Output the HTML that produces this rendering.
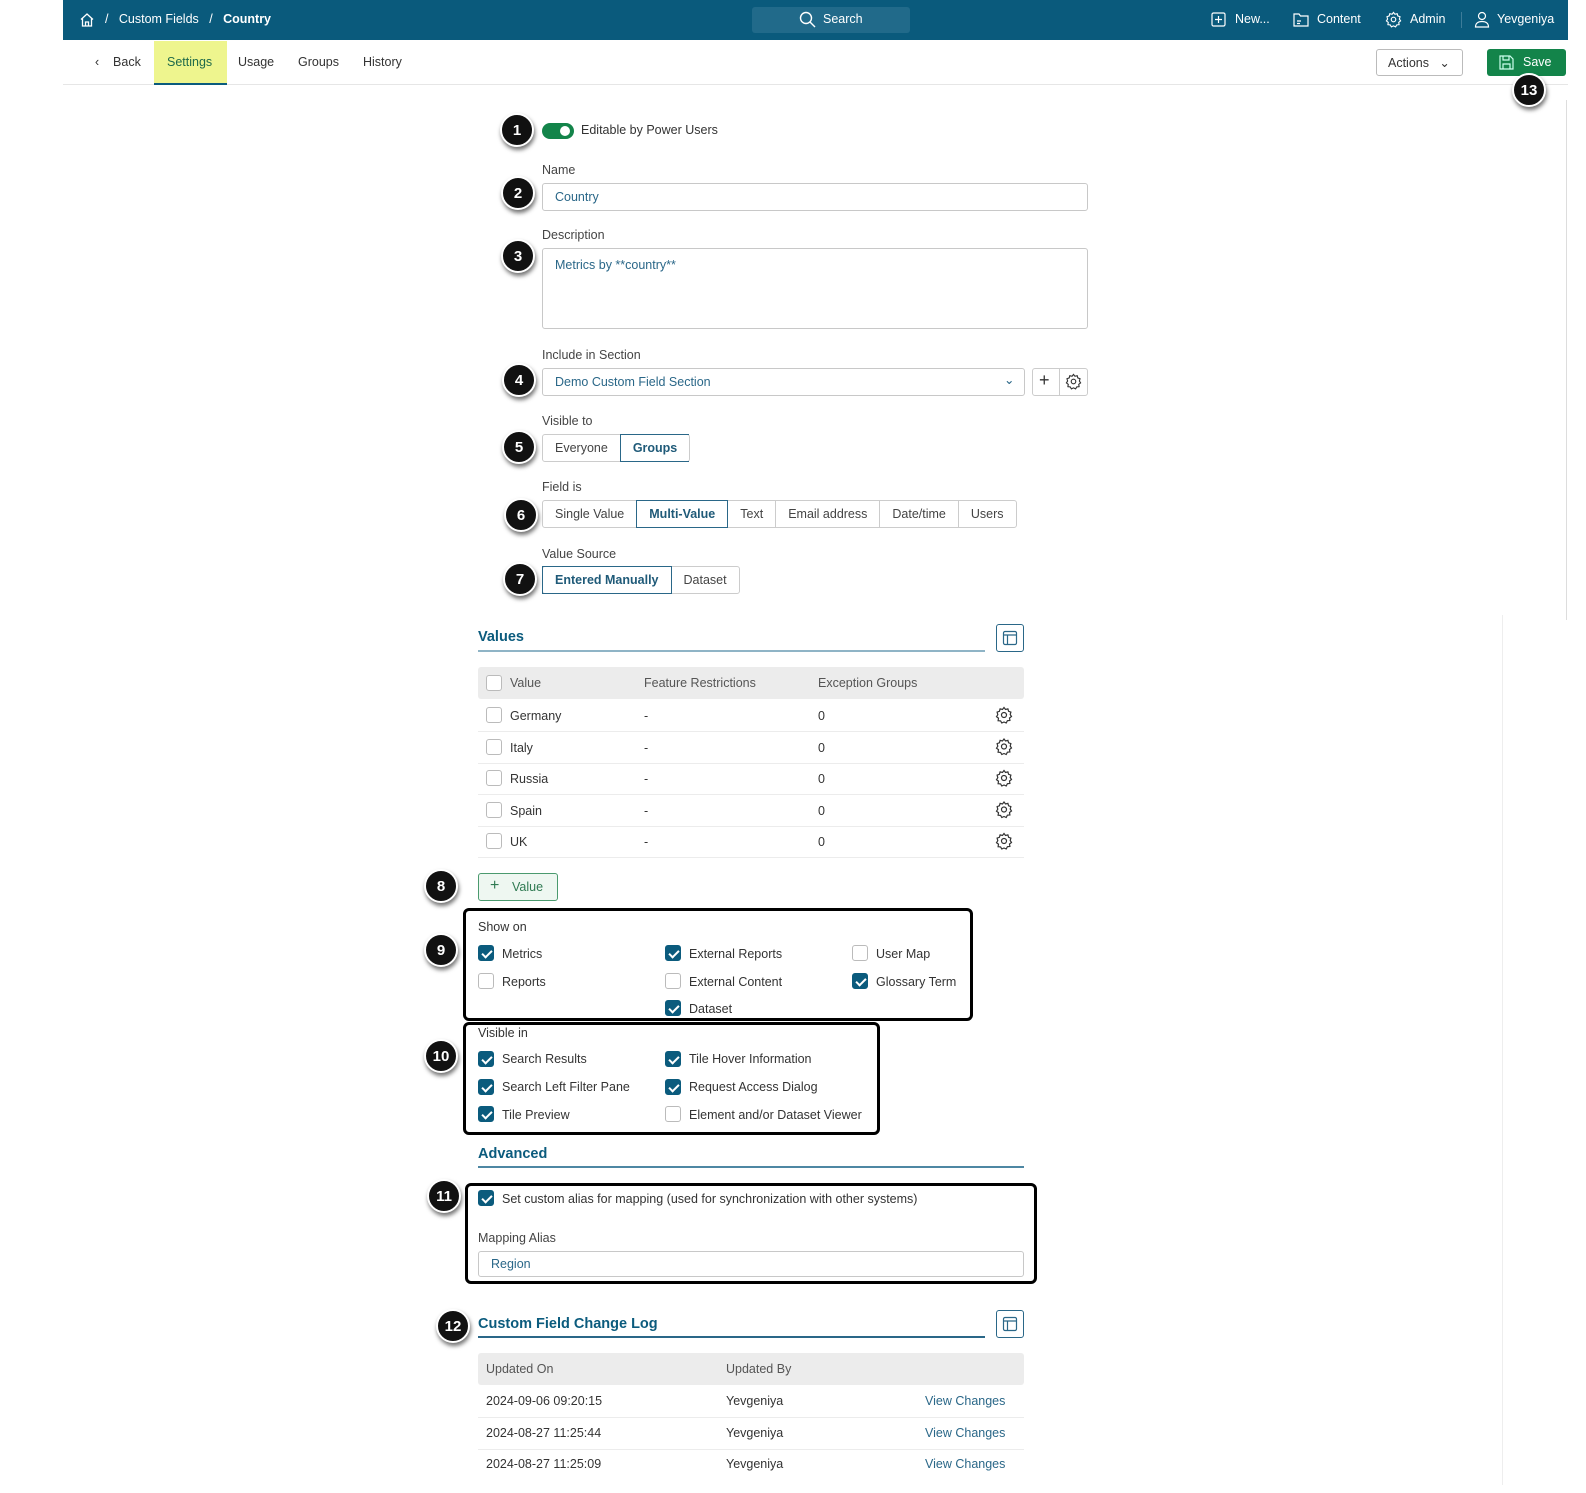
<!DOCTYPE html>
<html><head><meta charset="utf-8"><style>
*{box-sizing:border-box;margin:0;padding:0}
body{width:1586px;height:1493px;position:relative;background:#fff;font-family:"Liberation Sans",sans-serif;font-size:12.5px;color:#333;overflow:hidden}
.a{position:absolute}
.hdr{left:63px;top:0;width:1505px;height:40px;background:#0a5a7c;color:#fff}
.sub{left:63px;top:40px;width:1505px;height:45px;border-bottom:1px solid #e6e6e6}
.b{position:absolute;width:34px;height:34px;border-radius:50%;background:#111;border:2px solid #fff;color:#fff;font-weight:bold;font-size:15px;display:flex;align-items:center;justify-content:center;box-shadow:1px 3px 4px rgba(0,0,0,.55)}
.lbl{color:#444;font-size:12.5px}
.inp{border:1px solid #c8c8c8;border-radius:3px;color:#2a6788;padding-left:12px;display:flex;align-items:center}
.seg{display:flex;border:1px solid #ccc;border-radius:3px;height:28px}
.seg div{padding:0 12px;display:flex;align-items:center;border-right:1px solid #ccc;color:#444}
.seg div:last-child{border-right:none}
.seg .on{border:1px solid #2a6788;color:#1f5a78;font-weight:bold;margin:-1px 0 -1px -1px}
.cb{position:absolute;width:16px;height:16px;border:1px solid #bbb;border-radius:3px;background:#fff}
.cb.c{background:#0b5b7d;border-color:#0b5b7d}
.cb.c::after{content:"";position:absolute;left:5px;top:2px;width:4px;height:8px;border:solid #fff;border-width:0 2px 2px 0;transform:rotate(45deg)}
.t{position:absolute;white-space:nowrap}
.h2{color:#0b5b7d;font-size:14.5px;font-weight:bold}
.row{position:absolute;left:478px;width:546px;height:32px;border-bottom:1px solid #ececec}
.box{position:absolute;border:3px solid #000;border-radius:6px}
.ibtn{position:absolute;width:28px;height:28px;border:1px solid #2a6788;border-radius:3px}
</style></head><body>
<div class="a hdr">
 <svg class="a" style="left:16px;top:12px" width="16" height="16" viewBox="0 0 16 16" fill="none" stroke="#fff" stroke-width="1.3"><path d="M2 7.5L8 2l6 5.5M3.5 6.5V14h9V6.5M6.5 14v-4h3v4"/></svg>
 <span class="t" style="left:42px;top:12px">/&nbsp;&nbsp; Custom Fields &nbsp;&nbsp;/&nbsp;&nbsp; <b>Country</b></span>
 <div class="a" style="left:689px;top:7px;width:158px;height:26px;background:#216a8a;border-radius:3px"></div>
 <svg class="a" style="left:736px;top:11px" width="17" height="17" viewBox="0 0 17 17" fill="none" stroke="#fff" stroke-width="1.4"><circle cx="7" cy="7" r="5.5"/><path d="M11 11l5 5"/></svg>
 <span class="t" style="left:760px;top:12px">Search</span>
 <svg class="a" style="left:1148px;top:12px" width="15" height="15" viewBox="0 0 15 15" fill="none" stroke="#fff" stroke-width="1.2"><rect x="1" y="1" width="13" height="13" rx="1.5"/><path d="M7.5 4v7M4 7.5h7"/></svg>
 <span class="t" style="left:1172px;top:12px">New...</span>
 <svg class="a" style="left:1230px;top:12px" width="16" height="15" viewBox="0 0 16 15" fill="none" stroke="#fff" stroke-width="1.2"><path d="M1 2h5l1.5 2H15v10H1z M4 9h4M4 11.5h3"/></svg>
 <span class="t" style="left:1254px;top:12px">Content</span>
 <svg class="a" style="left:1322px;top:11px" width="17" height="17" viewBox="0 0 24 24" fill="none" stroke="#fff" stroke-width="1.6"><circle cx="12" cy="12" r="3.2"/><path d="M12 2l2 2.6 3.2-.8.9 3.2 3.1 1.1-.9 3.2L22 14l-2.6 2 .5 3.3-3.3.3L15 22.4 12 21l-3 1.4-1.6-2.8-3.3-.3.5-3.3L2 14l1.7-2.7-.9-3.2 3.1-1.1.9-3.2L10 4.6z"/></svg>
 <span class="t" style="left:1347px;top:12px">Admin</span>
 <div class="a" style="left:1398px;top:12px;width:1px;height:16px;background:#3d7c99"></div>
 <svg class="a" style="left:1411px;top:11px" width="16" height="17" viewBox="0 0 16 17" fill="none" stroke="#fff" stroke-width="1.2"><circle cx="8" cy="5" r="3.5"/><path d="M1.5 16c0-4 3-5.5 6.5-5.5s6.5 1.5 6.5 5.5z"/></svg>
 <span class="t" style="left:1434px;top:12px">Yevgeniya</span>
</div>
<div class="a sub">
 <span class="t" style="left:32px;top:15px">‹&nbsp;&nbsp;&nbsp; Back</span>
 <div class="a" style="left:91px;top:1px;width:73px;height:44px;background:#eef58e;border-bottom:2px solid #0b5b7d"></div>
 <span class="t" style="left:104px;top:15px;color:#1f6a4a">Settings</span>
 <span class="t" style="left:175px;top:15px">Usage</span>
 <span class="t" style="left:235px;top:15px">Groups</span>
 <span class="t" style="left:300px;top:15px">History</span>
 <div class="a" style="left:1313px;top:9px;width:87px;height:27px;border:1px solid #bbb;border-radius:3px"></div>
 <span class="t" style="left:1325px;top:15px">Actions&nbsp;&nbsp; ⌄</span>
 <div class="a" style="left:1424px;top:9px;width:79px;height:27px;background:#13844a;border-radius:3px"></div>
 <svg class="a" style="left:1436px;top:15px" width="15" height="15" viewBox="0 0 15 15" fill="none" stroke="#cfe" stroke-width="1.2"><path d="M1 1h10l3 3v10H1z M4 1v4h6V1 M4 14V9h7v5"/></svg>
 <span class="t" style="left:1460px;top:15px;color:#fff">Save</span>
</div>
<div class="a" style="left:1566px;top:100px;width:1px;height:520px;background:#ddd"></div>
<div class="a" style="left:1502px;top:615px;width:1px;height:870px;background:#eee"></div>

<div class="b" style="left:1512px;top:73px">13</div>

<div class="b" style="left:500px;top:113px">1</div>
<div class="a" style="left:542px;top:123px;width:32px;height:16px;border-radius:8px;background:#13844a"></div>
<div class="a" style="left:560px;top:126px;width:10px;height:10px;border-radius:50%;background:#fff"></div>
<span class="t" style="left:581px;top:123px">Editable by Power Users</span>

<span class="t lbl" style="left:542px;top:163px">Name</span>
<div class="b" style="left:501px;top:176px">2</div>
<div class="a inp" style="left:542px;top:183px;width:546px;height:28px">Country</div>

<span class="t lbl" style="left:542px;top:228px">Description</span>
<div class="b" style="left:501px;top:239px">3</div>
<div class="a inp" style="left:542px;top:248px;width:546px;height:81px;align-items:flex-start;padding-top:9px">Metrics by **country**</div>

<span class="t lbl" style="left:542px;top:348px">Include in Section</span>
<div class="b" style="left:502px;top:363px">4</div>
<div class="a inp" style="left:542px;top:368px;width:483px;height:28px">Demo Custom Field Section</div>
<span class="t" style="left:1004px;top:372px;color:#2a6788">⌄</span>
<div class="a" style="left:1032px;top:368px;width:56px;height:28px;border:1px solid #ccc;border-radius:3px"></div>
<div class="a" style="left:1059px;top:368px;width:1px;height:28px;background:#ccc"></div>
<span class="t" style="left:1039px;top:370px;font-size:18px">+</span>
<svg class="a" style="left:1065px;top:373px" width="17" height="17" viewBox="0 0 24 24" fill="none" stroke="#333" stroke-width="1.6"><circle cx="12" cy="12" r="3.2"/><path d="M12 2l2 2.6 3.2-.8.9 3.2 3.1 1.1-.9 3.2L22 14l-2.6 2 .5 3.3-3.3.3L15 22.4 12 21l-3 1.4-1.6-2.8-3.3-.3.5-3.3L2 14l1.7-2.7-.9-3.2 3.1-1.1.9-3.2L10 4.6z"/></svg>

<span class="t lbl" style="left:542px;top:414px">Visible to</span>
<div class="b" style="left:502px;top:430px">5</div>
<div class="a seg" style="left:542px;top:434px"><div>Everyone</div><div class="on">Groups</div></div>

<span class="t lbl" style="left:542px;top:480px">Field is</span>
<div class="b" style="left:504px;top:498px">6</div>
<div class="a seg" style="left:542px;top:500px"><div>Single Value</div><div class="on">Multi-Value</div><div>Text</div><div>Email address</div><div>Date/time</div><div>Users</div></div>

<span class="t lbl" style="left:542px;top:547px">Value Source</span>
<div class="b" style="left:503px;top:562px">7</div>
<div class="a seg" style="left:542px;top:566px"><div class="on" style="margin-left:-1px">Entered Manually</div><div>Dataset</div></div>

<span class="t h2" style="left:478px;top:629px">Values</span>
<div class="a" style="left:478px;top:650px;width:507px;height:2px;background:#8fb4c6"></div>
<div class="ibtn" style="left:996px;top:624px"></div>
<svg class="a" style="left:1002px;top:630px" width="16" height="16" viewBox="0 0 16 16" fill="none" stroke="#2a6788" stroke-width="1.2"><rect x="1.5" y="1.5" width="13" height="13" rx="1.5"/><path d="M1.5 5h13M5.5 5v9.5"/></svg>
<div class="a" style="left:478px;top:667px;width:546px;height:32px;background:#ececec;border-radius:3px"></div>
<div class="cb" style="left:486px;top:675px"></div>
<span class="t" style="left:510px;top:676px;color:#555">Value</span>
<span class="t" style="left:644px;top:676px;color:#555">Feature Restrictions</span>
<span class="t" style="left:818px;top:676px;color:#555">Exception Groups</span>

<div class="row" style="top:700px"></div>
<div class="row" style="top:732px"></div>
<div class="row" style="top:763px"></div>
<div class="row" style="top:795px"></div>
<div class="row" style="top:826px"></div>
<div class="cb" style="left:486px;top:707px"></div><span class="t" style="left:510px;top:709px">Germany</span><span class="t" style="left:644px;top:709px">-</span><span class="t" style="left:818px;top:709px">0</span>
<div class="cb" style="left:486px;top:739px"></div><span class="t" style="left:510px;top:741px">Italy</span><span class="t" style="left:644px;top:741px">-</span><span class="t" style="left:818px;top:741px">0</span>
<div class="cb" style="left:486px;top:770px"></div><span class="t" style="left:510px;top:772px">Russia</span><span class="t" style="left:644px;top:772px">-</span><span class="t" style="left:818px;top:772px">0</span>
<div class="cb" style="left:486px;top:802px"></div><span class="t" style="left:510px;top:804px">Spain</span><span class="t" style="left:644px;top:804px">-</span><span class="t" style="left:818px;top:804px">0</span>
<div class="cb" style="left:486px;top:833px"></div><span class="t" style="left:510px;top:835px">UK</span><span class="t" style="left:644px;top:835px">-</span><span class="t" style="left:818px;top:835px">0</span>
<svg class="a" style="left:995px;top:706px" width="18" height="150" viewBox="0 0 18 150" fill="none" stroke="#333" stroke-width="1.2">
<g id="g"><circle cx="9" cy="9" r="2.5"/><path d="M9 1.5l1.5 2 2.4-.6.7 2.4 2.3.8-.7 2.4L16.5 10.5l-2 1.5.4 2.5-2.5.2L11.2 17 9 16l-2.2 1-1.2-2.1-2.5-.2.4-2.5-2-1.5 1.3-2L2.1 6.1l2.3-.8.7-2.4 2.4.6z"/></g>
<use href="#g" y="31.5"/><use href="#g" y="63"/><use href="#g" y="94.5"/><use href="#g" y="126"/></svg>

<div class="b" style="left:424px;top:869px">8</div>
<div class="a" style="left:478px;top:873px;width:80px;height:28px;border:1px solid #4a9a6e;background:#eef7f1;border-radius:3px"></div>
<span class="t" style="left:490px;top:877px;color:#2f7a52;font-size:16px">+</span>
<span class="t" style="left:512px;top:880px;color:#2f7a52">Value</span>

<div class="box" style="left:463px;top:908px;width:510px;height:113px"></div>
<div class="b" style="left:424px;top:933px">9</div>
<span class="t" style="left:478px;top:920px">Show on</span>
<div class="cb c" style="left:478px;top:945px"></div><span class="t" style="left:502px;top:947px">Metrics</span>
<div class="cb" style="left:478px;top:973px"></div><span class="t" style="left:502px;top:975px">Reports</span>
<div class="cb c" style="left:665px;top:945px"></div><span class="t" style="left:689px;top:947px">External Reports</span>
<div class="cb" style="left:665px;top:973px"></div><span class="t" style="left:689px;top:975px">External Content</span>
<div class="cb c" style="left:665px;top:1000px"></div><span class="t" style="left:689px;top:1002px">Dataset</span>
<div class="cb" style="left:852px;top:945px"></div><span class="t" style="left:876px;top:947px">User Map</span>
<div class="cb c" style="left:852px;top:973px"></div><span class="t" style="left:876px;top:975px">Glossary Term</span>

<div class="box" style="left:463px;top:1022px;width:417px;height:113px"></div>
<div class="b" style="left:424px;top:1039px">10</div>
<span class="t" style="left:478px;top:1026px">Visible in</span>
<div class="cb c" style="left:478px;top:1051px"></div><span class="t" style="left:502px;top:1052px">Search Results</span>
<div class="cb c" style="left:478px;top:1079px"></div><span class="t" style="left:502px;top:1080px">Search Left Filter Pane</span>
<div class="cb c" style="left:478px;top:1106px"></div><span class="t" style="left:502px;top:1108px">Tile Preview</span>
<div class="cb c" style="left:665px;top:1051px"></div><span class="t" style="left:689px;top:1052px">Tile Hover Information</span>
<div class="cb c" style="left:665px;top:1079px"></div><span class="t" style="left:689px;top:1080px">Request Access Dialog</span>
<div class="cb" style="left:665px;top:1106px"></div><span class="t" style="left:689px;top:1108px">Element and/or Dataset Viewer</span>

<span class="t h2" style="left:478px;top:1146px">Advanced</span>
<div class="a" style="left:478px;top:1166px;width:546px;height:2px;background:#4d87a3"></div>

<div class="box" style="left:465px;top:1183px;width:572px;height:101px"></div>
<div class="b" style="left:427px;top:1179px">11</div>
<div class="cb c" style="left:478px;top:1190px"></div><span class="t" style="left:502px;top:1192px">Set custom alias for mapping (used for synchronization with other systems)</span>
<span class="t lbl" style="left:478px;top:1231px">Mapping Alias</span>
<div class="a inp" style="left:478px;top:1251px;width:546px;height:26px">Region</div>

<div class="b" style="left:436px;top:1309px">12</div>
<span class="t h2" style="left:478px;top:1316px">Custom Field Change Log</span>
<div class="a" style="left:478px;top:1336px;width:507px;height:2px;background:#2a6788"></div>
<div class="ibtn" style="left:996px;top:1310px"></div>
<svg class="a" style="left:1002px;top:1316px" width="16" height="16" viewBox="0 0 16 16" fill="none" stroke="#2a6788" stroke-width="1.2"><rect x="1.5" y="1.5" width="13" height="13" rx="1.5"/><path d="M1.5 5h13M5.5 5v9.5"/></svg>
<div class="a" style="left:478px;top:1353px;width:546px;height:32px;background:#ececec;border-radius:3px"></div>
<span class="t" style="left:486px;top:1362px;color:#555">Updated On</span>
<span class="t" style="left:726px;top:1362px;color:#555">Updated By</span>
<div class="row" style="top:1386px"></div>
<div class="row" style="top:1418px"></div>
<span class="t" style="left:486px;top:1394px">2024-09-06 09:20:15</span><span class="t" style="left:726px;top:1394px">Yevgeniya</span><span class="t" style="left:925px;top:1394px;color:#2a6788">View Changes</span>
<span class="t" style="left:486px;top:1426px">2024-08-27 11:25:44</span><span class="t" style="left:726px;top:1426px">Yevgeniya</span><span class="t" style="left:925px;top:1426px;color:#2a6788">View Changes</span>
<span class="t" style="left:486px;top:1457px">2024-08-27 11:25:09</span><span class="t" style="left:726px;top:1457px">Yevgeniya</span><span class="t" style="left:925px;top:1457px;color:#2a6788">View Changes</span>
</body></html>
